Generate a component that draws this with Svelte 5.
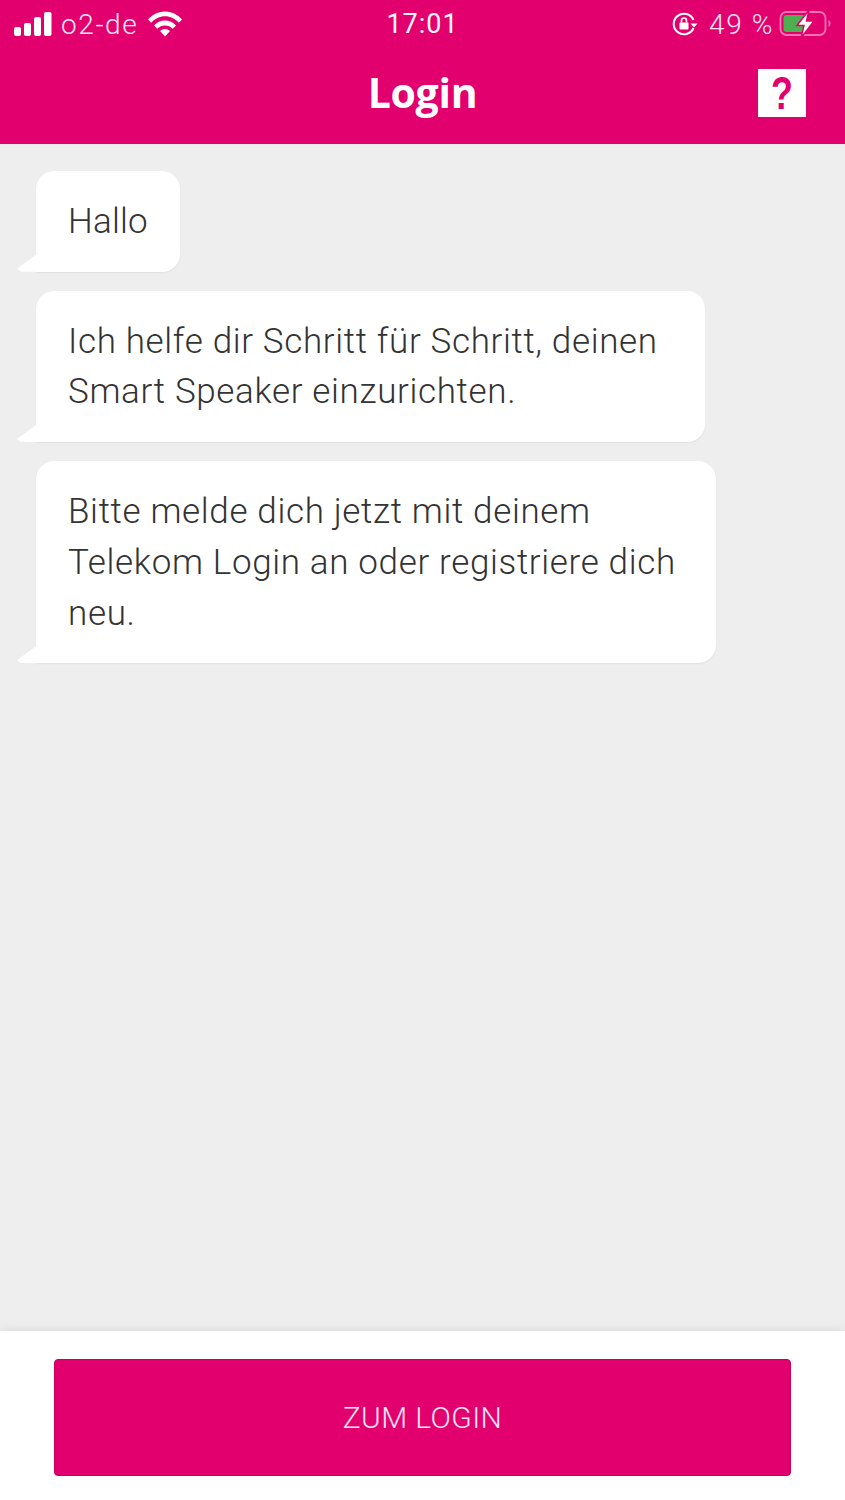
<script>
  const messages = [
    { lines: ['Hallo'], cls: 'a' },
    { lines: ['Ich helfe dir Schritt für Schritt, deinen', 'Smart Speaker einzurichten.'], cls: 'b' },
    { lines: ['Bitte melde dich jetzt mit deinem', 'Telekom Login an oder registriere dich', 'neu.'], cls: 'c' }
  ];
</script>

<div class="screen">
  <header class="top">
    <div class="status">
      <div class="left">
        <svg class="signal" width="38" height="24" viewBox="0 0 38 24" fill="#fff">
          <rect x="0" y="15" width="7" height="9" rx="2"/>
          <rect x="10" y="11" width="7" height="13" rx="2"/>
          <rect x="20" y="5" width="7" height="19" rx="2"/>
          <rect x="30" y="0" width="7.500" height="24" rx="2"/>
        </svg>
        <span class="carrier">o2-de</span>
        <svg class="wifi" width="34" height="26" viewBox="0 0 34 26" fill="#fff">
          <path d="M0 8.500C4.500 3.200 10.500 0.500 17 0.500s12.500 2.700 17 8L30.800 11.800C27.200 7.700 22.400 5.300 17 5.300S6.800 7.700 3.200 11.800Z"/>
          <path d="M6 14.500C9 11.400 12.800 9.600 17 9.600s8 1.800 11 4.900L24.700 17.800C22.600 15.700 20 14.500 17 14.500s-5.600 1.200-7.700 3.300Z"/>
          <path d="M12 20C13.400 18.700 15.100 18 17 18s3.600.7 5 2L17 25.500Z"/>
        </svg>
      </div>
      <span class="time">17:01</span>
      <div class="right">
        <svg class="lock" width="26" height="24" viewBox="0 0 26 24" fill="none">
          <path d="M21.500 16A10.300 10.300 0 1 1 21.500 8" stroke="#fff" stroke-width="2"/>
          <path d="M18.500 11.500h7l-3.500 4Z" fill="#fff"/>
          <rect x="7.500" y="10.500" width="9" height="7" rx="1" fill="#fff"/>
          <path d="M9.500 10.500V8.500a2.500 2.500 0 0 1 5 0v2" stroke="#fff" stroke-width="1.600"/>
        </svg>
        <span class="pct">49 %</span>
        <svg class="battery" width="52" height="28" viewBox="0 0 52 28" fill="none">
          <rect x="1.500" y="2" width="45" height="23" rx="6" stroke="#fff" stroke-opacity=".45" stroke-width="1.800"/>
          <path d="M49.500 10v7c1.300-.5 2-1.800 2-3.500s-.7-3-2-3.500Z" fill="#fff" fill-opacity=".45"/>
          <rect x="4.500" y="5" width="22" height="17" rx="3" fill="#4eaf50"/>
          <path d="M30 0 18 15.500h7L22 28l13-17h-7.500Z" fill="#fff" stroke="#e2006f" stroke-width="1.500"/>
        </svg>
      </div>
    </div>
    <div class="nav">
      <h1>Login</h1>
      <button class="help" aria-label="Hilfe"><span class="mark">?</span></button>
    </div>
  </header>

  <main class="chat">
    {#each messages as m}
      <div class="bubble {m.cls}">
        {#each m.lines as line}<div class="line">{line}</div>{/each}
      </div>
    {/each}
  </main>

  <footer class="foot">
    <button class="cta">ZUM LOGIN</button>
  </footer>
</div>

<style>
  :global(body) { margin: 0; background: #eeeeee; }
  .screen {
    width: 845px; height: 1500px; display: flex; flex-direction: column;
    background: #eeeeee; font-family: Roboto, "Liberation Sans", sans-serif; overflow: hidden;
  }
  .top { height: 144px; background: #e2006f; color: #fff; flex: none; display: flex; flex-direction: column; }
  .status {
    height: 48px; display: grid; grid-template-columns: 1fr auto 1fr; align-items: center;
    padding: 0 14px; box-sizing: border-box;
  }
  .left { display: flex; align-items: center; }
  .signal { margin-right: 9px; }
  .carrier { font-size: 28px; font-weight: 300; letter-spacing: 1.600px; color: #ffe6f2; margin-right: 10px; }
  .time { font-size: 27px; font-weight: 400; letter-spacing: 1px; color: #fff5fa; }
  .right { display: flex; align-items: center; justify-content: flex-end; }
  .lock { margin-right: 10px; position: relative; left: -1px; }
  .pct { font-size: 28px; font-weight: 300; letter-spacing: 1.600px; color: #ffe6f2; margin: 0 5px 0 0; }
  .nav { flex: 1; position: relative; display: flex; align-items: center; justify-content: center; }
  h1 { margin: 0 0 8px; font-size: 41px; font-weight: 700; letter-spacing: -0.3px; color: #fff; font-family: "Open Sans", sans-serif; }
  .help {
    position: absolute; left: 758px; top: 21px; width: 48px; height: 48px; padding: 0; border: 0;
    background: #fff; color: #e2006f; font-size: 46px; font-weight: 700; line-height: 48px;
    font-family: "Liberation Sans", sans-serif;
  }
  .mark { display: inline-block; transform: scaleX(.78); }
  .chat { flex: 1; padding: 27px 0 0 36px; display: flex; flex-direction: column; gap: 19px; align-items: flex-start; }
  .bubble {
    position: relative; background: #fff; box-sizing: border-box; padding: 26px 20px 24px 32px;
    border-radius: 18px 18px 18px 0;
    box-shadow: 0 1px 2px rgba(0,0,0,.06);
    font-size: 35px; line-height: 50.700px; font-weight: 300; letter-spacing: .65px; color: #333; white-space: nowrap;
  }
  .bubble::before {
    content: ""; position: absolute; left: -19px; bottom: 0; width: 19px; height: 17px;
    background: #fff; clip-path: polygon(100% 0, 100% 100%, 4px 100%, 0 calc(100% - 3px));
  }
  .a { width: 144px; letter-spacing: .2px; }
  .b { width: 669px; }
  .c { width: 680px; }
  .foot { height: 169px; flex: none; background: #fff; box-shadow: 0 -2px 10px rgba(0,0,0,.07); position: relative; padding: 28px 54px 0; box-sizing: border-box; }
  .cta {
    display: block; width: 737px; height: 117px; border: 1px solid #c9005f; border-radius: 4px; background: #e2006f;
    color: #ffe3f0; font-size: 30px; font-weight: 300; letter-spacing: .4px; font-family: inherit; padding: 0;
  }
</style>
